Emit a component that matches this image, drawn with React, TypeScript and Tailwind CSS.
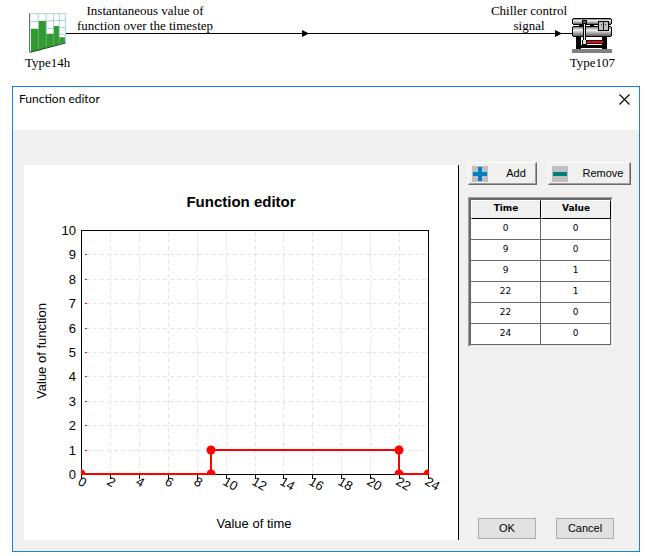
interface Point {
  time: number;
  value: number;
}

const points: Point[] = [
  { time: 0, value: 0 },
  { time: 9, value: 0 },
  { time: 9, value: 1 },
  { time: 22, value: 1 },
  { time: 22, value: 0 },
  { time: 24, value: 0 },
];

const PLOT = { left: 57, top: 65, width: 347, height: 244 };

const xOf = (time: number) => Math.round(PLOT.left + (time / 24) * PLOT.width);
const yOf = (value: number) => Math.round(PLOT.top + PLOT.height - (value / 10) * PLOT.height);

function ForcingFunctionIcon() {
  return (
    <svg viewBox="27 24 111 120" className="block w-[37px] h-10" aria-hidden="true">
      <path d="M32 26H136V113L32 141Z" fill="#fff" />
      <path d="M32 26H137M32 50L137 46M32 76L137 67M32 101L137 87" stroke="#a9d3d3" strokeWidth="3" fill="none" />
      <path d="M33 71H55V136L33 142ZM55 48H79V129L55 136ZM79 86H101V123L79 129ZM101 63H118V118L101 123ZM118 97H136V113L118 118Z" fill="#339933" />
      <path d="M55 26V71M79 26V86M101 26V63M118 26V97M136 26V113" stroke="#a9d3d3" strokeWidth="3" fill="none" />
      <path d="M55 71V133M79 86V127M101 86V121M118 97V116" stroke="#7cc47c" strokeWidth="2" fill="none" />
      <path d="M28.500 25V142" stroke="#5d7373" strokeWidth="4" />
      <path d="M30 142L137 114" stroke="#194d19" strokeWidth="3" />
    </svg>
  );
}

function ChillerIcon() {
  return (
    <svg viewBox="36 39 120 105" className="block w-10 h-[35px]" shapeRendering="crispEdges" aria-hidden="true">
      <defs>
        <linearGradient id="shell" x1="0" y1="0" x2="0" y2="1">
          <stop offset="0" stopColor="#808080" />
          <stop offset="0.35" stopColor="#f4f4f4" />
          <stop offset="0.6" stopColor="#b8b8b8" />
          <stop offset="1" stopColor="#606060" />
        </linearGradient>
      </defs>
      <path d="M36 132H156V144H36Z" fill="#808080" />
      <path d="M48 93H63V132H48ZM126 93H141V132H126ZM60 120H129V129H60Z" fill="#000" />
      <path d="M57 57H69V66H57ZM90 57H102V66H90Z" fill="#000" />
      <path d="M39 39H153V42H156V57H153V60H39V57H36V42H39Z" fill="#000" />
      <rect x="39" y="42" width="114" height="15" fill="url(#shell)" />
      <path d="M39 63H153V66H156V93H153V96H39V93H36V66H39Z" fill="#000" />
      <rect x="39" y="66" width="114" height="27" fill="url(#shell)" />
      <path d="M75 105H132V117H75Z" fill="#000" />
      <path d="M78 108H129V114H78Z" fill="#f00" />
      <path d="M66 45H81V57H78V105H81V120H66V105H69V57H66Z" fill="#000" />
      <path d="M69 48H78V54H69Z" fill="#606060" />
      <path d="M72 57H75V105H78V117H69V105H72Z" fill="#e4e4e4" />
      <path d="M114 48H147V78H114Z" fill="#000" />
      <path d="M117 51H129V75H117ZM132 51H144V75H132Z" fill="#c0c0c0" />
      <path d="M123 57H126V60H123ZM135 57H138V60H135Z" fill="#404040" />
    </svg>
  );
}

function SystemDiagram() {
  return (
    <section className="relative h-[86px] font-['Liberation_Serif',serif] text-[13px] leading-[15px] text-center">
      <svg className="absolute left-[66px] top-[33px] w-[calc(100%-145px)] h-px" aria-hidden="true">
        <rect width="100%" height="1" fill="#000" />
      </svg>
      <svg viewBox="0 0 7 7" className="absolute left-[302px] top-[30px] w-[7px] h-[7px]" aria-hidden="true">
        <path d="M0 0L7 3.500L0 7Z" />
      </svg>
      <svg viewBox="0 0 7 7" className="absolute right-[89px] top-[30px] w-[7px] h-[7px]" aria-hidden="true">
        <path d="M0 0L7 3.500L0 7Z" />
      </svg>
      <div className="absolute left-[25px] top-[13px] flex flex-col items-center gap-[2px]">
        <ForcingFunctionIcon />
        <span>Type14h</span>
      </div>
      <p className="absolute left-[69px] top-[3px] w-[152px]">
        Instantaneous value of
        <br />
        function over the timestep
      </p>
      <p className="absolute right-[82px] top-[3px] w-20">
        Chiller control
        <br />
        signal
      </p>
      <div className="absolute right-9 top-[18px] flex flex-col items-center gap-[2px]">
        <ChillerIcon />
        <span>Type107</span>
      </div>
    </section>
  );
}

function FunctionChart() {
  const times = Array.from({ length: 13 }, (_, i) => i * 2);
  const values = Array.from({ length: 11 }, (_, i) => i);
  const right = PLOT.left + PLOT.width;
  const bottom = PLOT.top + PLOT.height;

  return (
    <svg viewBox="0 0 434 375" className="block w-full h-auto text-[13px]" role="img" aria-label="Value of function over time">
      <defs>
        <clipPath id="plot">
          <rect x={PLOT.left} y={PLOT.top} width={PLOT.width + 1} height={PLOT.height + 1} />
        </clipPath>
      </defs>
      <text x="217" y="42" textAnchor="middle" className="text-[15px] font-bold">Function editor</text>

      <g transform="translate(0.5 0.5)" shapeRendering="crispEdges" fill="none">
        <g stroke="#e3e3e3" strokeDasharray="4 3">
          {times.slice(1, -1).map((t) => (
            <path key={t} d={`M${xOf(t)} ${PLOT.top + 1}V${bottom}`} />
          ))}
          {values.slice(1, -1).map((v) => (
            <path key={v} d={`M${PLOT.left + 4} ${yOf(v)}H${right}`} />
          ))}
        </g>
        <rect x={PLOT.left} y={PLOT.top} width={PLOT.width} height={PLOT.height} stroke="#000" />
        {times.map((t) => (
          <path key={t} d={`M${xOf(t)} ${bottom}v4`} stroke="#000" />
        ))}
        {values.slice(1, -1).map((v) => (
          <path key={v} d={`M${PLOT.left + 3} ${yOf(v)}h2`} stroke="#f00" />
        ))}
      </g>

      {values.map((v) => (
        <text key={v} x="52" y={yOf(v) + 5} textAnchor="end">{v}</text>
      ))}
      {times.map((t) => (
        <text key={t} transform={`translate(${xOf(t) - 4} ${bottom + 10}) rotate(30)`}>{t}</text>
      ))}

      <g clipPath="url(#plot)">
        <polyline
          points={points.map((p) => `${xOf(p.time)},${yOf(p.value)}`).join(" ")}
          fill="none"
          stroke="#f00"
          strokeWidth="2"
          shapeRendering="crispEdges"
        />
        {points.map((p, i) => (
          <circle key={i} cx={xOf(p.time)} cy={yOf(p.value)} r="4.5" fill="#f00" />
        ))}
      </g>

      <text x="230" y="363" textAnchor="middle">Value of time</text>
      <text transform="translate(22 186) rotate(-90)" textAnchor="middle">Value of function</text>
    </svg>
  );
}

function PointsTable() {
  return (
    <div className="w-[145px] border border-t-[#a0a0a0] border-l-[#a0a0a0] border-r-white border-b-white">
      <div className="border-t-2 border-l-2 border-r border-b border-t-[#696969] border-l-[#696969] border-r-[#e3e3e3] border-b-[#e3e3e3]">
        <table className="w-full table-fixed border-separate border-spacing-0 bg-white text-center font-['DejaVu_Sans',sans-serif] text-[9px] leading-3">
          <thead>
            <tr className="h-[19px] bg-[#f0f0f0]">
              <th className="p-0 pb-[3px] border-t border-l border-t-white border-l-white border-r border-b border-r-black border-b-black font-bold">Time</th>
              <th className="p-0 pb-[3px] border-t border-l border-t-white border-l-white border-r border-b border-r-black border-b-black font-bold">Value</th>
            </tr>
          </thead>
          <tbody>
            {points.map((p, i) => (
              <tr key={i} className="h-[21px]">
                <td className="p-0 pb-[3px] border-r border-b border-[#696969]">{p.time}</td>
                <td className="p-0 pb-[3px] border-r border-b border-[#696969]">{p.value}</td>
              </tr>
            ))}
          </tbody>
        </table>
      </div>
    </div>
  );
}

const toolButton =
  "flex items-center h-[23px] pl-[3px] bg-[#f0f0f0] border border-t-white border-l-white border-r-[#696969] border-b-[#696969] shadow-[inset_-1px_-1px_0_#a0a0a0]";
const dialogButton = "w-[58px] h-[21px] bg-[#e1e1e1] border border-[#adadad]";

export default function App() {
  return (
    <main className="bg-white pb-1 text-black">
      <SystemDiagram />

      <section className="ml-3 mr-[11px] border border-[#1883d7] bg-[#f0f0f0] font-['Liberation_Sans',sans-serif] text-[11px]">
        <header className="flex items-start justify-between h-[43px] pl-[6px] pr-[9px] pt-1 bg-white">
          <h1 className="font-['Lato',sans-serif] text-[12px] leading-4">Function editor</h1>
          <button type="button" aria-label="Close" className="pt-[3px]">
            <svg viewBox="0 0 11 11" className="block w-[11px] h-[11px]" aria-hidden="true">
              <path d="M0.500 0.500L10.500 10.500M10.500 0.500L0.500 10.500" stroke="#000" strokeWidth="1.100" />
            </svg>
          </button>
        </header>

        <div className="flex gap-[9px] pl-[11px] pr-2 pt-8 pb-[11px]">
          <div className="flex-1 mt-[3px] bg-white border-r border-black">
            <FunctionChart />
          </div>

          <div className="flex flex-col justify-between w-[163px]">
            <div>
              <div className="flex justify-between mb-3">
                <button type="button" className={`${toolButton} w-[69px]`}>
                  <svg viewBox="0 0 16 16" className="w-4 h-4" shapeRendering="crispEdges" aria-hidden="true">
                    <path d="M0 0H16V16H0Z" fill="#c0c0c0" />
                    <path d="M6 1H10V6H15V10H10V15H6V10H1V6H6Z" fill="#0080c0" />
                  </svg>
                  <span className="flex-1 pl-2">Add</span>
                </button>
                <button type="button" className={`${toolButton} w-[83px]`}>
                  <svg viewBox="0 0 16 16" className="w-4 h-4" shapeRendering="crispEdges" aria-hidden="true">
                    <path d="M0 0H16V16H0Z" fill="#c0c0c0" />
                    <path d="M1 6H15V10H1Z" fill="#008080" />
                  </svg>
                  <span className="flex-1 pl-2">Remove</span>
                </button>
              </div>
              <PointsTable />
            </div>

            <div className="flex gap-5 pl-[10px] pb-px">
              <button type="button" className={dialogButton}>OK</button>
              <button type="button" className={dialogButton}>Cancel</button>
            </div>
          </div>
        </div>
      </section>
    </main>
  );
}
